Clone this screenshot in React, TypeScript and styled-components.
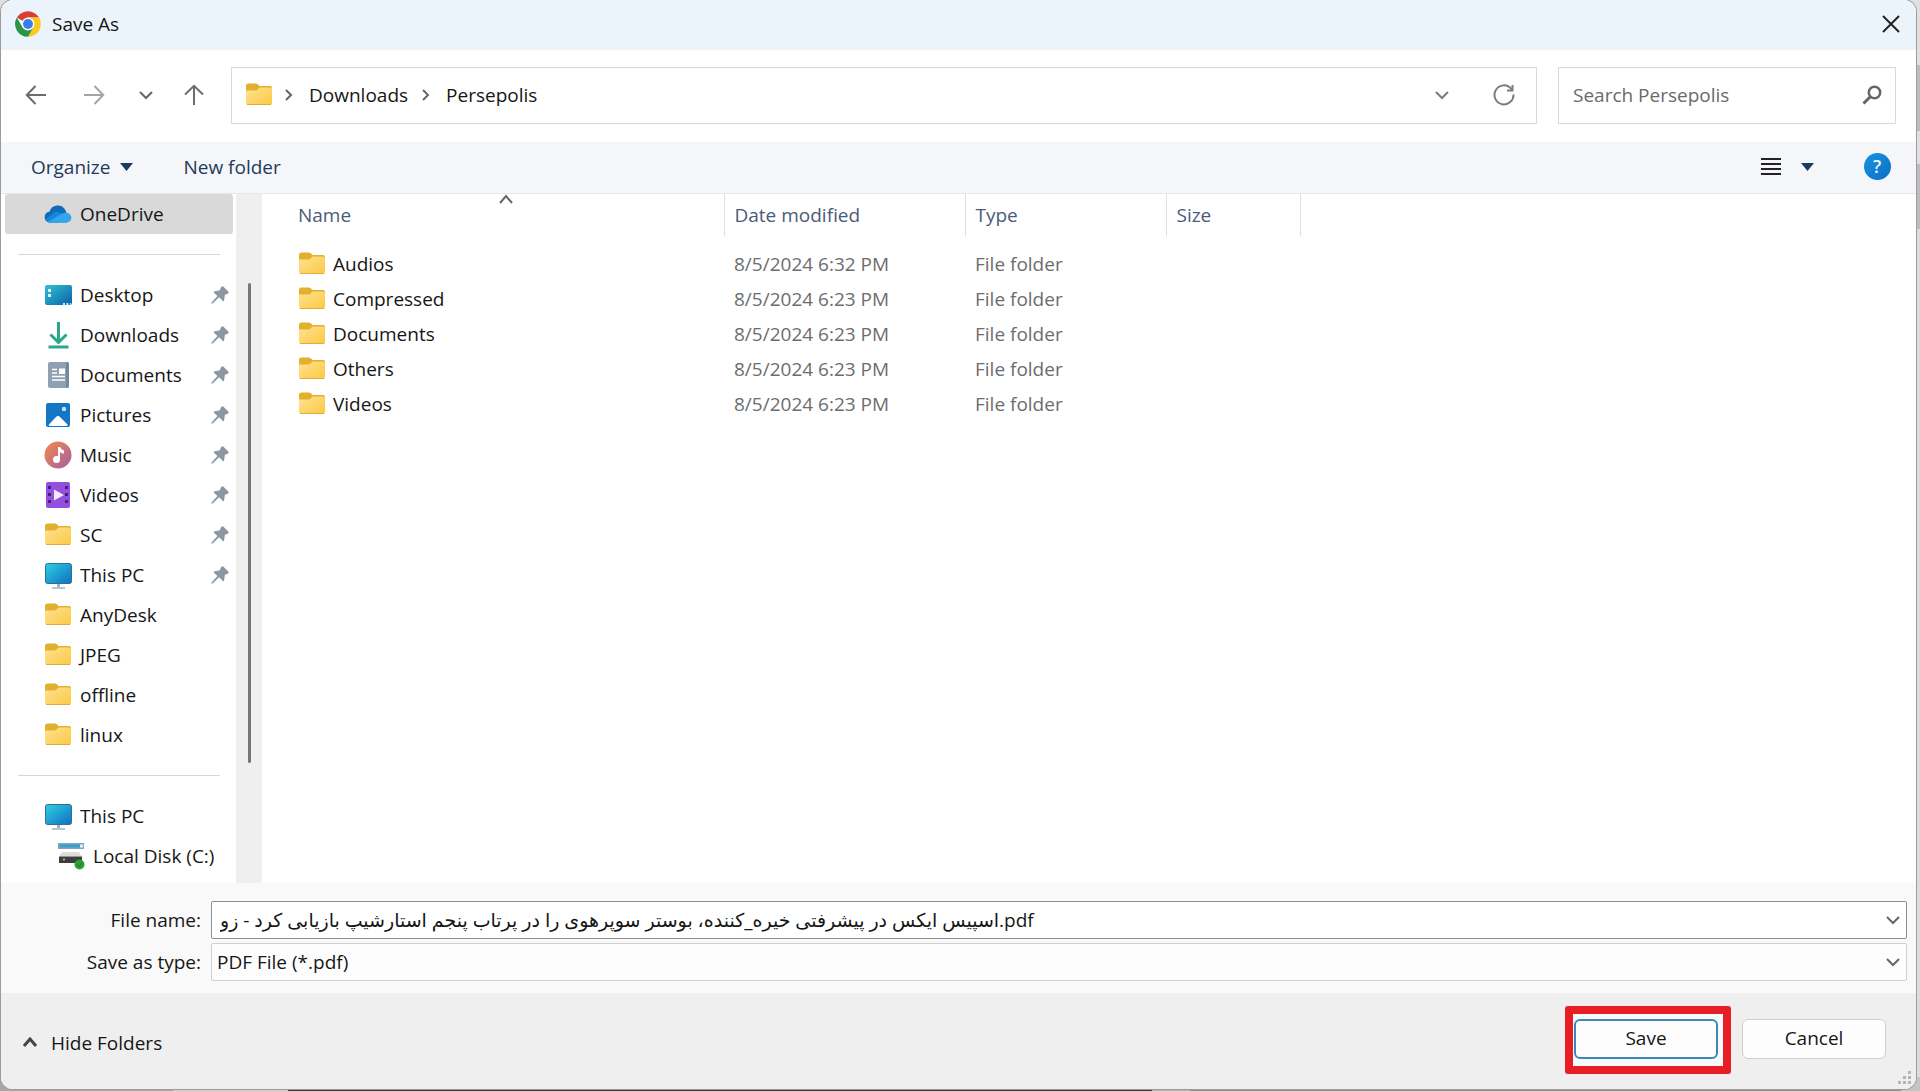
import React, { useState } from "react";
import styled, { createGlobalStyle } from "styled-components";

const GlobalStyle = createGlobalStyle`
  * { box-sizing: border-box; }
  body {
    margin: 0;
    background: #c4c4c6;
    color: #161616;
    font: 19px/26px "Open Sans", "Noto Sans", "DejaVu Sans", sans-serif;
  }
  button, input, select { font: inherit; color: inherit; }
  svg { display: block; flex: none; }
`;

const Desktop = styled.div`
  display: flex;
  flex-direction: column;
  min-height: 100vh;
  padding: 0 4px 2px 1px;
  background:
    linear-gradient(90deg, #a9a5aa 9%, #cfcfcf 9% 15%, #38353b 15% 60%, #b4b4b6 60% 62%, #8f8f92 62% 99%, #c4c4c6 99%)
      left bottom / 100% 14px no-repeat,
    linear-gradient(#e2dfe0 6%, #bdbdbf 6% 12%, #e0e0e0 12% 15%, #bdbdbf 15% 21%, #dcdcdc 21%);
`;

const Dialog = styled.main`
  flex: 1;
  display: flex;
  flex-direction: column;
  border-radius: 12px;
  overflow: hidden;
  background: #fff;
  box-shadow: 0 0 0 1px #9c9c9c;
`;

const TitleBar = styled.header`
  display: flex;
  align-items: center;
  gap: 10px;
  height: 50px;
  padding: 0 15px 2px 13px;
  background: #ebf4fa;
`;

const Title = styled.h1`
  flex: 1;
  margin: 0;
  font: inherit;
`;

const IconButton = styled.button<{ $w?: number }>`
  display: flex;
  align-items: center;
  justify-content: center;
  width: ${(p) => p.$w ?? 28}px;
  height: 28px;
  padding: 0;
  border: 0;
  background: none;
`;

const NavRow = styled.div`
  display: flex;
  align-items: center;
  gap: 21px;
  height: 92px;
  padding: 0 20px 2px 21px;
`;

const NavButtons = styled.div`
  display: flex;
  align-items: center;
  gap: 26px;
  width: 188px;
`;

const AddressBar = styled.nav`
  flex: 1;
  display: flex;
  align-items: center;
  height: 57px;
  padding: 0 18px 0 13px;
  border: 1px solid #d9d9d9;
`;

const Crumbs = styled.div`
  flex: 1;
  display: flex;
  align-items: center;
  gap: 11px;
`;

const Crumb = styled.a`
  padding: 0 2px 0 4px;
  color: inherit;
  text-decoration: none;
`;

const AddressTools = styled.div`
  display: flex;
  gap: 34px;
`;

const SearchBox = styled.label`
  display: flex;
  align-items: center;
  width: 338px;
  height: 57px;
  padding: 0 13px 0 14px;
  border: 1px solid #d9d9d9;
`;

const SearchInput = styled.input`
  flex: 1;
  min-width: 0;
  padding: 0;
  border: 0;
  outline: 0;
  background: none;
  &::placeholder { color: #6a6a6a; opacity: 1; }
`;

const Toolbar = styled.div`
  display: flex;
  align-items: center;
  height: 52px;
  padding: 0 25px 2px 30px;
  border-bottom: 1px solid #e6e7e9;
  background: #f4f6f9;
  color: #1f3a5c;
`;

const ToolButton = styled.button`
  display: flex;
  align-items: center;
  gap: 10px;
  margin-right: 50px;
  padding: 0;
  border: 0;
  background: none;
`;

const ToolbarEnd = styled.div`
  display: flex;
  align-items: center;
  gap: 8px;
  margin-left: auto;
`;

const HelpButton = styled(IconButton)`
  margin-left: 34px;
`;

const Body = styled.div`
  flex: 1;
  display: flex;
`;

const Sidebar = styled.nav`
  width: 235px;
  padding: 0 3px 0 4px;
`;

const SideItem = styled.a<{ $active?: boolean; $nested?: boolean }>`
  display: flex;
  align-items: center;
  gap: 8px;
  height: 40px;
  padding: 0 4px 0 ${(p) => (p.$nested ? 52 : 39)}px;
  border-radius: 3px;
  background: ${(p) => (p.$active ? "#d9d9d9" : "none")};
  color: inherit;
  text-decoration: none;
  white-space: nowrap;
`;

const SideLabel = styled.span`
  flex: 1;
`;

const SideRule = styled.hr`
  height: 41px;
  margin: 0 13px;
  border: 0;
  background: linear-gradient(#d6d6d6, #d6d6d6) center / 100% 1px no-repeat;
`;

const ScrollTrack = styled.div`
  display: flex;
  justify-content: center;
  width: 26px;
  padding: 89px 0 120px;
  background: #efefef;
`;

const ScrollThumb = styled.div`
  width: 3px;
  border-radius: 2px;
  background: #767676;
`;

const FilePane = styled.section`
  flex: 1;
  padding-left: 26px;
`;

const FileTable = styled.table`
  width: 100%;
  table-layout: fixed;
  border-collapse: collapse;
  tbody::before {
    content: "";
    display: block;
    height: 10px;
  }
`;

const HeadCell = styled.th<{ $w?: number }>`
  position: relative;
  width: ${(p) => (p.$w ? p.$w + "px" : "auto")};
  height: 42px;
  padding: 0 0 0 10px;
  border-right: ${(p) => (p.$w ? "1px solid #e0e0e0" : "0")};
  color: #4a5b76;
  font-weight: 400;
  text-align: left;
`;

const SortMark = styled.span`
  position: absolute;
  top: 0;
  left: 50%;
  margin-left: -7px;
`;

const Cell = styled.td`
  height: 35px;
  padding: 0 0 0 10px;
  color: #6d6d6d;
`;

const FileName = styled.div`
  display: flex;
  align-items: center;
  gap: 7px;
  color: #161616;
`;

const Form = styled.form`
  display: grid;
  grid-template-columns: 200px 1fr;
  column-gap: 10px;
  row-gap: 4px;
  height: 110px;
  padding: 18px 9px 12px 0;
  background: #f9f9f9;
`;

const FieldLabel = styled.label`
  align-self: center;
  text-align: right;
`;

const Field = styled.div<{ $strong?: boolean }>`
  position: relative;
  display: flex;
  align-items: center;
  height: 38px;
  border: 1px solid ${(p) => (p.$strong ? "#8e8e8e" : "#d0d0d0")};
  border-radius: 2px;
  background: ${(p) => (p.$strong ? "#fff" : "#fdfdfd")};
`;

const NameInput = styled.input`
  flex: 1;
  min-width: 0;
  height: 36px;
  padding: 0 5px 0 8px;
  border: 0;
  outline: 0;
  background: none;
`;

const TypeSelect = styled.select`
  flex: 1;
  height: 36px;
  padding: 0 40px 0 5px;
  border: 0;
  outline: 0;
  appearance: none;
  background: none;
`;

const SelectArrow = styled.span`
  position: absolute;
  right: 6px;
  display: flex;
  pointer-events: none;
`;

const Footer = styled.footer`
  position: relative;
  display: flex;
  align-items: flex-start;
  gap: 24px;
  height: 96px;
  padding: 26px 30px 0 21px;
  background: #efefef;
`;

const HideFolders = styled.button`
  display: flex;
  align-items: center;
  gap: 13px;
  height: 48px;
  margin-right: auto;
  padding: 0;
  border: 0;
  background: none;
`;

const SaveSlot = styled.div`
  position: relative;
`;

const Highlight = styled.span`
  position: absolute;
  inset: -13px -13px -15px -9px;
  border: 8px solid #e81e25;
  border-radius: 3px;
  background: #f7fafc;
`;

const DialogButton = styled.button<{ $primary?: boolean }>`
  position: relative;
  display: block;
  width: 144px;
  height: 40px;
  padding: 0 0 2px;
  border: ${(p) => (p.$primary ? "2px solid #3f88b0" : "1px solid #cfcfcf")};
  border-radius: 6px;
  background: #fdfdfd;
`;

const Grip = styled.span`
  position: absolute;
  right: 5px;
  bottom: 4px;
`;

const Chevron = ({ dir, w = 14, color = "#666", sw = 2 }: { dir: "up" | "down" | "right"; w?: number; color?: string; sw?: number }) => {
  const d = { up: "M1 9 7 2l6 7", down: "M1 3l6 6 6-6", right: "M4 1l5 5-5 5" }[dir];
  return (
    <svg width={w} height={12} viewBox="0 0 14 12" fill="none" stroke={color} strokeWidth={sw} aria-hidden>
      <path d={d} />
    </svg>
  );
};

const CrumbChevron = () => (
  <svg width="10" height="14" viewBox="0 0 10 14" fill="none" stroke="#666" strokeWidth="2" aria-hidden>
    <path d="m2 2 5 5-5 5" />
  </svg>
);

const Caret = () => (
  <svg width="13" height="8" viewBox="0 0 13 8" aria-hidden>
    <path d="M0 0h13L6.5 8z" fill="#1c3a5e" />
  </svg>
);

const ChromeLogo = () => (
  <svg width="28" height="28" viewBox="0 0 48 48" aria-hidden>
    <path d="M24 24 4.900 13A22 22 0 0 1 43 13H24z" fill="#d93f33" />
    <path d="M43 13a22 22 0 0 1-19 33l9.500-16.500L24 13z" fill="#fbc920" />
    <path d="M4.900 13a22 22 0 0 0 19.100 33l9.500-16.500L24 34l-9.500-4.500z" fill="#2b9447" />
    <circle cx="24" cy="24" r="11" fill="#fff" />
    <circle cx="24" cy="24" r="8.500" fill="#3b7ded" />
  </svg>
);

const FolderIcon = () => (
  <svg width="28" height="24" viewBox="0 0 28 24" aria-hidden>
    <defs>
      <linearGradient id="folder" x1="0" y1="0" x2="1" y2="1">
        <stop offset="0" stopColor="#ffe391" />
        <stop offset="1" stopColor="#fbc843" />
      </linearGradient>
    </defs>
    <path d="M1 3Q1 .5 3.500 .5h7.200q1.300 0 2.300 1l1.500 1.500H25q2 0 2 2V12H1z" fill="#e2b02f" />
    <path d="M1 7.500h9.500q1.200 0 2.100-.9L14.500 4.500H25q2 0 2 2V19.500q0 2.500-2.500 2.500h-21Q1 22 1 19.500z" fill="url(#folder)" />
    <path d="M2 21.500h24" stroke="#dfae38" strokeWidth="1" />
  </svg>
);

const CloudIcon = () => (
  <svg width="28" height="20" viewBox="0 0 28 20" aria-hidden>
    <path d="M6.500 18.500a5.500 5.500 0 0 1-.8-11A8.500 8.500 0 0 1 21 5.500q1 1.500 1.200 3l-8 10z" fill="#0f6cbd" />
    <path d="M1.500 15.500 10 8.500q3-1.500 6 .5l9 7-2 2.500H6.500q-3.500 0-5-3z" fill="#1686d9" />
    <path d="M4 18 17 10q7-4 10 2 1.500 5.500-4.500 6.500h-16Q5 18.500 4 18z" fill="#31a5ee" />
  </svg>
);

const DesktopIcon = () => (
  <svg width="28" height="22" viewBox="0 0 28 22" aria-hidden>
    <defs>
      <linearGradient id="desk" x1="0" y1="0" x2="1" y2="1">
        <stop offset="0" stopColor="#2fc0d4" />
        <stop offset="1" stopColor="#0b62a8" />
      </linearGradient>
    </defs>
    <rect x="1" y="1" width="27" height="20" rx="2" fill="url(#desk)" />
    <path d="M4 5h3v3H4zM4 10h3v3H4z" fill="#d9f8fb" />
    <path d="M19 20h2M22.500 20h2M26 20h1" stroke="#cfe9f5" strokeWidth="2" />
  </svg>
);

const DownloadIcon = () => (
  <svg width="28" height="28" viewBox="0 0 28 28" fill="none" strokeWidth="3" aria-hidden>
    <path d="M14.500 1v19M6.500 13.500l8 8 8-8" stroke="#27a889" />
    <path d="M4.500 26h20" stroke="#2ba78a" />
  </svg>
);

const DocumentIcon = () => (
  <svg width="28" height="28" viewBox="0 0 28 28" aria-hidden>
    <rect x="4" y="1" width="21" height="26" rx="2" fill="#8fa0b2" />
    <path d="M22 1h1q2 0 2 2v22q0 2-2 2h-1z" fill="#75889c" />
    <path d="M8 8.500h5M8 12h5M8 15.500h13M8 19h13" stroke="#fff" strokeWidth="1.500" />
    <path d="M15 7.500h6v5.500h-6z" fill="#fff" />
  </svg>
);

const PictureIcon = () => (
  <svg width="28" height="26" viewBox="0 0 28 26" aria-hidden>
    <rect x="2" y="1" width="24" height="24" rx="2" fill="#1676c6" />
    <path d="M4.500 23 12 15q2-2 4 0l8 8q-1 1-2 1H6q-1 0-1.500-1z" fill="#fff" />
    <circle cx="20" cy="7" r="2.200" fill="#b9e6fb" />
  </svg>
);

const MusicIcon = () => (
  <svg width="28" height="28" viewBox="0 0 28 28" aria-hidden>
    <defs>
      <linearGradient id="music" x1="0" y1="0" x2="1" y2="1">
        <stop offset="0.200" stopColor="#e5805c" />
        <stop offset="1" stopColor="#a45fa0" />
      </linearGradient>
    </defs>
    <circle cx="14" cy="14" r="13.500" fill="url(#music)" />
    <circle cx="12.500" cy="18.500" r="3.500" fill="#fff" />
    <path d="M14 6h2q1 3 4 3.500v3q-2.500 0-4-1.500v8h-2z" fill="#fff" />
  </svg>
);

const VideoIcon = () => (
  <svg width="28" height="28" viewBox="0 0 28 28" aria-hidden>
    <rect x="2" y="1" width="24" height="26" rx="2" fill="#9250dc" />
    <path d="M4 5h3v3H4zM4 12h3v3H4zM4 19h3v3H4zM21 5h3v3h-3zM21 12h3v3h-3zM21 19h3v3h-3z" fill="#43207c" />
    <path d="M10 8.500 20 14l-10 5.500z" fill="#f4e8ff" />
  </svg>
);

const PcIcon = () => (
  <svg width="28" height="28" viewBox="0 0 28 28" aria-hidden>
    <defs>
      <linearGradient id="pc" x1="0" y1="0" x2="1" y2="1">
        <stop offset="0" stopColor="#2ed0e0" />
        <stop offset="1" stopColor="#0f6fc4" />
      </linearGradient>
    </defs>
    <rect x="1.500" y="2.500" width="26" height="20" rx="2" fill="url(#pc)" stroke="#31718f" />
    <path d="M13 23h3v3h-3z" fill="#9fb4c1" />
    <path d="M8 27h13" stroke="#9fb0bc" strokeWidth="1.500" />
  </svg>
);

const DiskIcon = () => (
  <svg width="28" height="28" viewBox="0 0 28 28" aria-hidden>
    <path d="M1 1h26v6H1z" fill="#7ba9c4" />
    <path d="M2.500 2.500H23v3H2.500z" fill="#3f9ccb" />
    <path d="M23 2.500h3v3h-3z" fill="#e8eef2" />
    <path d="M5 10h17l3 4.500H2z" fill="#dcdcdc" />
    <path d="M2 14.500h23v6.500H2z" fill="#3e3e3e" />
    <circle cx="7" cy="17.500" r="1" fill="#a4e08a" />
    <circle cx="22.500" cy="22.500" r="5" fill="#2aa136" />
    <path d="m20 22.500 2 2 3.500-4" stroke="#137a22" fill="none" />
  </svg>
);

const PinIcon = () => (
  <svg width="18" height="20" viewBox="0 0 18 20" aria-hidden>
    <path
      d="M10.500 1.500q1-.8 2 .2l4.800 4.800q.9 1.200-.3 1.900l-3.200 1.600-.6 5.300q-.5 1.400-1.600.5L8 12.300 2.200 18l-1.900.9.600-2 5.500-6L3 7.800q-.8-1.200.6-1.600L8.500 5.600z"
      fill="#8b98a3"
    />
  </svg>
);

const SearchIcon = () => (
  <svg width="20" height="20" viewBox="0 0 20 20" fill="none" stroke="#666" aria-hidden>
    <circle cx="12.500" cy="7.500" r="5.700" strokeWidth="2.500" />
    <path d="M8.500 11.500 1.500 18.500" strokeWidth="3" />
  </svg>
);

const ArrowIcon = ({ kind, color }: { kind: "left" | "right" | "up"; color: string }) => {
  const turn = { left: 0, right: 180, up: 90 }[kind];
  return (
    <svg width="22" height="22" viewBox="0 0 22 22" fill="none" stroke={color} strokeWidth="2" aria-hidden>
      <path d="M21 11H2M10.500 2 1.800 11l8.700 9" transform={`rotate(${turn} 11 11)`} />
    </svg>
  );
};

const RefreshIcon = () => (
  <svg width="22" height="22" viewBox="0 0 22 22" fill="none" stroke="#7c7c7c" strokeWidth="2" aria-hidden>
    <path d="M20.500 10.500a9.500 9.500 0 1 1-3.500-7l2.500 2.500" />
    <path d="M19.500 1v5.500H14" />
  </svg>
);

const ListIcon = () => (
  <svg width="20" height="20" viewBox="0 0 20 20" aria-hidden>
    <path d="M0 2h20M0 7h20M0 12h20M0 17h20" stroke="#222" strokeWidth="2" />
  </svg>
);

const HelpMark = styled.span`
  width: 27px;
  height: 27px;
  border-radius: 50%;
  background: linear-gradient(135deg, #1b93e2, #0a6fc4);
  color: #e9f7ff;
  font-size: 18px;
  font-weight: 600;
  line-height: 27px;
`;

const pinned = [
  { label: "Desktop", Icon: DesktopIcon, pin: true },
  { label: "Downloads", Icon: DownloadIcon, pin: true },
  { label: "Documents", Icon: DocumentIcon, pin: true },
  { label: "Pictures", Icon: PictureIcon, pin: true },
  { label: "Music", Icon: MusicIcon, pin: true },
  { label: "Videos", Icon: VideoIcon, pin: true },
  { label: "SC", Icon: FolderIcon, pin: true },
  { label: "This PC", Icon: PcIcon, pin: true },
  { label: "AnyDesk", Icon: FolderIcon, pin: false },
  { label: "JPEG", Icon: FolderIcon, pin: false },
  { label: "offline", Icon: FolderIcon, pin: false },
  { label: "linux", Icon: FolderIcon, pin: false },
];

const files = [
  { name: "Audios", date: "8/5/2024 6:32 PM" },
  { name: "Compressed", date: "8/5/2024 6:23 PM" },
  { name: "Documents", date: "8/5/2024 6:23 PM" },
  { name: "Others", date: "8/5/2024 6:23 PM" },
  { name: "Videos", date: "8/5/2024 6:23 PM" },
];

export default function App() {
  const [name, setName] = useState(
    "اسپیس ایکس در پیشرفتی خیره_کننده، بوستر سوپرهوی را در پرتاب پنجم استارشیپ بازیابی کرد - زو.pdf"
  );
  return (
    <>
      <GlobalStyle />
      <Desktop>
        <Dialog>
          <TitleBar>
            <ChromeLogo />
            <Title>Save As</Title>
            <IconButton $w={20} aria-label="Close">
              <svg width="18" height="18" viewBox="0 0 18 18" stroke="#222" strokeWidth="2" aria-hidden>
                <path d="m1 1 16 16M17 1 1 17" />
              </svg>
            </IconButton>
          </TitleBar>

          <NavRow>
            <NavButtons>
              <IconButton aria-label="Back"><ArrowIcon kind="left" color="#6c6c6c" /></IconButton>
              <IconButton $w={38} aria-label="Forward"><ArrowIcon kind="right" color="#a4a4a4" /></IconButton>
              <IconButton $w={14} aria-label="Recent locations"><Chevron dir="down" /></IconButton>
              <IconButton $w={32} aria-label="Up"><ArrowIcon kind="up" color="#6c6c6c" /></IconButton>
            </NavButtons>
            <AddressBar aria-label="Address">
              <Crumbs>
                <FolderIcon />
                <CrumbChevron />
                <Crumb href="#downloads">Downloads</Crumb>
                <CrumbChevron />
                <Crumb href="#persepolis">Persepolis</Crumb>
              </Crumbs>
              <AddressTools>
                <IconButton aria-label="Previous locations"><Chevron dir="down" color="#7c7c7c" /></IconButton>
                <IconButton aria-label="Refresh"><RefreshIcon /></IconButton>
              </AddressTools>
            </AddressBar>
            <SearchBox>
              <SearchInput type="text" placeholder="Search Persepolis" aria-label="Search Persepolis" />
              <SearchIcon />
            </SearchBox>
          </NavRow>

          <Toolbar>
            <ToolButton>Organize <Caret /></ToolButton>
            <ToolButton>New folder</ToolButton>
            <ToolbarEnd>
              <IconButton aria-label="View"><ListIcon /></IconButton>
              <IconButton aria-label="View options"><Caret /></IconButton>
              <HelpButton aria-label="Help"><HelpMark>?</HelpMark></HelpButton>
            </ToolbarEnd>
          </Toolbar>

          <Body>
            <Sidebar aria-label="Folders">
              <SideItem href="#onedrive" $active><CloudIcon /><SideLabel>OneDrive</SideLabel></SideItem>
              <SideRule />
              {pinned.map(({ label, Icon, pin }) => (
                <SideItem key={label} href={"#" + label}>
                  <Icon />
                  <SideLabel>{label}</SideLabel>
                  {pin && <PinIcon />}
                </SideItem>
              ))}
              <SideRule />
              <SideItem href="#pc"><PcIcon /><SideLabel>This PC</SideLabel></SideItem>
              <SideItem href="#c" $nested><DiskIcon /><SideLabel>Local Disk (C:)</SideLabel></SideItem>
            </Sidebar>
            <ScrollTrack><ScrollThumb /></ScrollTrack>
            <FilePane>
              <FileTable>
                <thead>
                  <tr>
                    <HeadCell $w={436}>
                      Name
                      <SortMark><Chevron dir="up" /></SortMark>
                    </HeadCell>
                    <HeadCell $w={241}>Date modified</HeadCell>
                    <HeadCell $w={201}>Type</HeadCell>
                    <HeadCell $w={134}>Size</HeadCell>
                    <HeadCell as="td" />
                  </tr>
                </thead>
                <tbody>
                  {files.map((f) => (
                    <tr key={f.name}>
                      <Cell><FileName><FolderIcon />{f.name}</FileName></Cell>
                      <Cell>{f.date}</Cell>
                      <Cell>File folder</Cell>
                      <Cell />
                      <Cell />
                    </tr>
                  ))}
                </tbody>
              </FileTable>
            </FilePane>
          </Body>

          <Form id="save-form" onSubmit={(e) => e.preventDefault()}>
            <FieldLabel htmlFor="file-name">File name:</FieldLabel>
            <Field $strong>
              <NameInput id="file-name" dir="ltr" value={name} onChange={(e) => setName(e.target.value)} />
              <IconButton type="button" $w={26} aria-label="Recent names"><Chevron dir="down" color="#666" /></IconButton>
            </Field>
            <FieldLabel htmlFor="file-type">Save as type:</FieldLabel>
            <Field>
              <TypeSelect id="file-type" defaultValue="pdf">
                <option value="pdf">PDF File (*.pdf)</option>
              </TypeSelect>
              <SelectArrow><Chevron dir="down" color="#666" /></SelectArrow>
            </Field>
          </Form>

          <Footer>
            <HideFolders><Chevron dir="up" color="#444" sw={3} w={16} />Hide Folders</HideFolders>
            <SaveSlot>
              <Highlight />
              <DialogButton type="submit" form="save-form" $primary>Save</DialogButton>
            </SaveSlot>
            <DialogButton type="button">Cancel</DialogButton>
            <Grip>
              <svg width="14" height="14" viewBox="0 0 14 14" fill="#b5b5b5" aria-hidden>
                <path d="M11 0h3v3h-3zM11 5h3v3h-3zM6 5h3v3H6zM11 10h3v3h-3zM6 10h3v3H6zM1 10h3v3H1z" />
              </svg>
            </Grip>
          </Footer>
        </Dialog>
      </Desktop>
    </>
  );
}
